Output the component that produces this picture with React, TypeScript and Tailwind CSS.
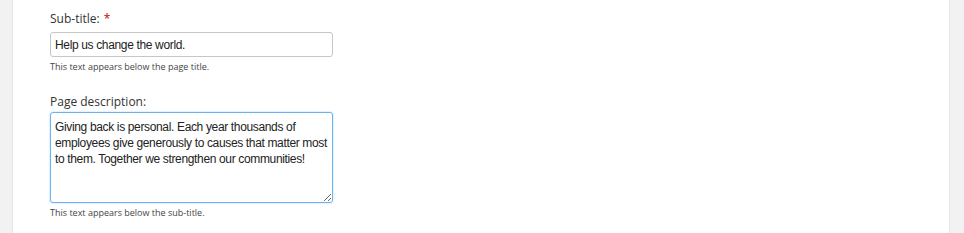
export default function App() {
  return (
    <div className="flex h-[233px] w-full bg-[#f2f2f2]">
      <div className="w-[13px] shrink-0 border-r border-[#e6e6e6]" />
      <div className="flex-1 bg-white pl-[37px] pt-[10px] font-['Open_Sans',sans-serif] text-[#333]">
        <div className="flex items-center gap-[4px] text-[12px] leading-[17px]">
          <span>Sub-title:</span>
          <span className="text-[#c00]">*</span>
        </div>
        <input
          className="mt-[5px] block h-[25px] w-[283px] rounded-[3px] border border-[#c6c6c6] px-[4px] font-['Liberation_Sans',Arial,sans-serif] text-[12px] tracking-[-0.35px] text-[#222] outline-none"
          defaultValue="Help us change the world."
        />
        <p className="mt-[3px] text-[9px] leading-[13px] text-[#444]">This text appears below the page title.</p>

        <div className="mt-[20px] text-[12px] leading-[17px]">Page description:</div>
        <textarea
          className="mt-[2px] block h-[91px] w-[283px] resize-y rounded-[3px] border border-[#6cb2f0] px-[4px] pt-[6px] font-['Liberation_Sans',Arial,sans-serif] text-[12px] leading-[16px] tracking-[-0.35px] text-[#222] shadow-[0_0_2px_#9fcdf7] outline-none"
          defaultValue="Giving back is personal. Each year thousands of employees give generously to causes that matter most to them. Together we strengthen our communities!"
        />
        <p className="mt-[3px] text-[9px] leading-[13px] text-[#444]">This text appears below the sub-title.</p>
      </div>
      <div className="w-[15px] shrink-0 border-l border-[#e6e6e6]" />
    </div>
  );
}
